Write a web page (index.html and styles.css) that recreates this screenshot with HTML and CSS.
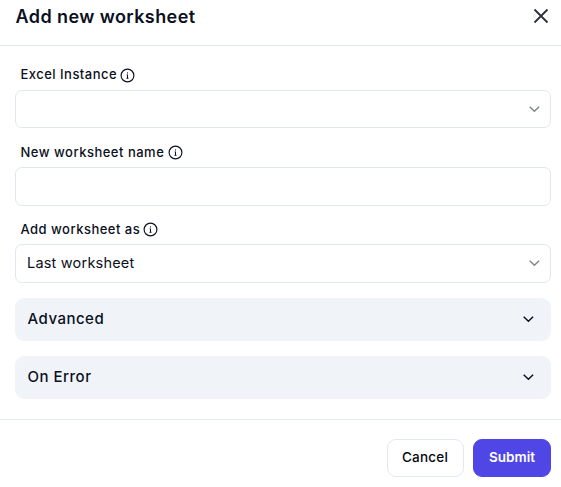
FILE: index.html
```html
<!DOCTYPE html>
<html lang="en">
<head>
<meta charset="utf-8">
<title>Add new worksheet</title>
<link rel="stylesheet" href="styles.css">
</head>
<body>
<svg class="defs" aria-hidden="true">
  <symbol id="info" viewBox="0 0 16 16"><circle cx="7.500" cy="7.500" r="6.400"/><path class="mark" d="M6.700 6.800h.8v3.400M6.500 10.300h2M7.500 4.400v1.100"/></symbol>
  <symbol id="chevron" viewBox="0 0 12 12"><path d="M1.700 3.800 6.400 8.200l4.700-4.400"/></symbol>
</svg>
<main class="dialog">
  <header class="header">
    <h1 class="title">Add new worksheet</h1>
    <svg class="close" viewBox="0 0 16 16"><path d="M1.500 1.500l13 13M14.500 1.500l-13 13"/></svg>
  </header>
  <section class="body">
    <div class="field first">
      <label class="label">Excel Instance <svg class="info"><use href="#info"/></svg></label>
      <div class="control"><span></span><svg class="chevron muted"><use href="#chevron"/></svg></div>
    </div>
    <div class="field">
      <label class="label name">New worksheet name <svg class="info"><use href="#info"/></svg></label>
      <div class="control tall"></div>
    </div>
    <div class="field">
      <label class="label">Add worksheet as <svg class="info"><use href="#info"/></svg></label>
      <div class="control tall"><span class="value">Last worksheet</span><svg class="chevron muted"><use href="#chevron"/></svg></div>
    </div>
    <div class="panel"><span>Advanced</span><svg class="chevron"><use href="#chevron"/></svg></div>
    <div class="panel"><span>On Error</span><svg class="chevron"><use href="#chevron"/></svg></div>
  </section>
  <footer class="footer">
    <button class="button cancel">Cancel</button>
    <button class="button submit">Submit</button>
  </footer>
</main>
</body>
</html>
```
FILE: styles.css
```css
* { box-sizing: border-box; }
body { margin: 0; background: #fff; color: #0b1022; font-family: Inter, sans-serif; overflow: hidden; }
svg { fill: none; stroke: currentColor; flex: none; }
.defs { display: none; }
.dialog { height: 487px; display: flex; flex-direction: column; }
.header { height: 46px; padding: 5px 12px 0 15.5px; border-bottom: 1px solid #e2e8f0; display: flex; justify-content: space-between; align-items: flex-start; }
.title { margin: 0; font-size: 18px; line-height: 24px; font-weight: 600; letter-spacing: .42px; }
.close { width: 16px; height: 16px; margin-top: 3px; stroke-width: 1.8; color: #2b303c; }
.body { height: 373px; padding: 18px 10px 0 15px; }
.label { height: 20px; margin: 0 0 5px 5.5px; display: flex; align-items: center; gap: 2.7px; font-size: 13px; font-weight: 500; letter-spacing: .48px; }
.name { gap: 4.2px; letter-spacing: .5px; }
.first .label { margin-bottom: 6px; }
.info { width: 16px; height: 16px; stroke-width: 1.15; margin-top: 2px; }
.first .info { margin-top: 3px; }
.mark { stroke-width: 1; }
.control { height: 38px; margin-bottom: 14px; padding: 0 10px 0 11px; border: 1px solid #e0e7f0; border-radius: 7px; display: flex; align-items: center; justify-content: space-between; }
.tall { height: 39px; margin-bottom: 13px; }
.value { font-size: 14.5px; letter-spacing: .2px; padding-bottom: 2px; }
.chevron { width: 12px; height: 12px; stroke-width: 1.5; }
.tall .chevron, .panel .chevron { margin-bottom: 1px; }
.muted { color: #81858f; }
.panel { height: 43px; margin-top: 15px; padding: 0 17px 0 12.5px; border-radius: 9px; background: #f0f4f9; display: flex; align-items: center; justify-content: space-between; font-size: 15px; font-weight: 500; letter-spacing: .5px; }
.panel span { padding-bottom: 2px; }
.footer { height: 68px; padding: 19px 10px 0; border-top: 1px solid #e2e8f0; display: flex; justify-content: flex-end; align-items: flex-start; gap: 9px; }
.button { height: 38px; padding: 0 0 2px; border: 1px solid #e2e8f0; border-radius: 9px; background: #fff; color: #05070f; font: 500 13.5px Inter, sans-serif; letter-spacing: .2px; }
.cancel { width: 77px; padding-right: 1px; }
.submit { width: 78px; background: #4f46e5; border-color: #4f46e5; color: #fff; font-weight: 600; letter-spacing: 0; }
```
